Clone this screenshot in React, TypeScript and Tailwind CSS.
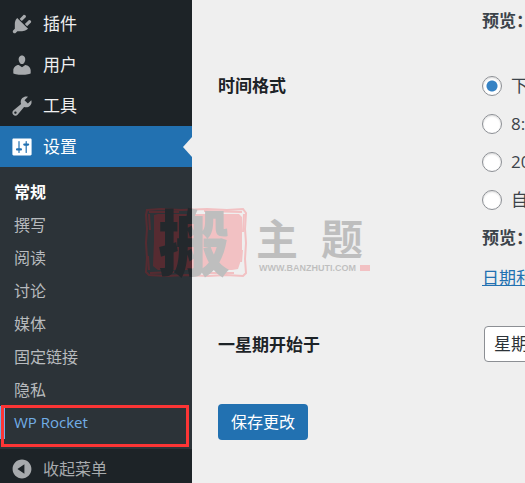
import type { ReactNode } from "react";

const menu = [
  {
    label: "插件",
    path: "M13.11 4.36L9.87 7.6 8 5.73l3.24-3.24c.35-.34 1.05-.2 1.56.32.52.51.66 1.21.31 1.55zm-8 1.77l.91-1.12 9.01 9.01-1.19.84c-.71.71-2.63 1.16-3.82 1.16H6.14L4.9 17.26c-.59.59-1.54.59-2.12 0-.59-.58-.59-1.53 0-2.12l1.24-1.24v-3.88c0-1.13.4-3.19 1.09-3.89zm7.26 3.97l3.24-3.24c.34-.35 1.04-.21 1.55.31.52.51.66 1.21.31 1.55l-3.24 3.25z",
  },
  {
    label: "用户",
    path: "M10 9.25c-2.27 0-2.73-3.44-2.73-3.44C7 4.02 7.82 2 9.97 2c2.16 0 2.98 2.02 2.71 3.81 0 0-.41 3.44-2.68 3.44zm0 2.57L12.72 10c2.39 0 4.52 2.33 4.52 4.53v2.49s-3.65 1.13-7.24 1.13c-3.65 0-7.24-1.13-7.24-1.13v-2.49c0-2.25 1.94-4.48 4.47-4.48z",
  },
  {
    label: "工具",
    path: "M16.68 9.77c-1.34 1.34-3.3 1.67-4.95.99l-5.41 6.52c-.99.99-2.59.99-3.58 0s-.99-2.59 0-3.57l6.52-5.42c-.68-1.65-.35-3.61.99-4.95 1.28-1.28 3.12-1.62 4.72-1.06l-2.89 2.89 2.82 2.82 2.86-2.87c.53 1.58.18 3.39-1.08 4.65zM3.81 16.21c.4.39 1.04.39 1.43 0 .4-.4.4-1.04 0-1.43-.39-.4-1.03-.4-1.43 0-.39.39-.39 1.03 0 1.43z",
  },
];

const settingsPath =
  "M18 16V4c0-.55-.45-1-1-1H3c-.55 0-1 .45-1 1v12c0 .55.45 1 1 1h14c.55 0 1-.45 1-1zM8 11h1c.55 0 1 .45 1 1s-.45 1-1 1H8v1.5c0 .28-.22.5-.5.5s-.5-.22-.5-.5V13H6c-.55 0-1-.45-1-1s.45-1 1-1h1V5.5c0-.28.22-.5.5-.5s.5.22.5.5V11zm5-2h-1c-.55 0-1-.45-1-1s.45-1 1-1h1V5.5c0-.28.22-.5.5-.5s.5.22.5.5V7h1c.55 0 1 .45 1 1s-.45 1-1 1h-1v5.5c0 .28-.22.5-.5.5s-.5-.22-.5-.5V9z";

const collapsePath =
  "M10 2.16c4.33 0 7.84 3.51 7.84 7.84s-3.51 7.84-7.84 7.84S2.16 14.33 2.16 10 5.67 2.16 10 2.16zm2 11.72V6.12L6.18 9.97z";

const submenu = ["撰写", "阅读", "讨论", "媒体", "固定链接", "隐私"];

const timeFormats = ["下午8:25", "8:25 下午", "20:25", "自定义："];

const Icon = ({ path }: { path: string }) => (
  <svg viewBox="0 0 20 20" className="size-6 shrink-0" fill="currentColor" aria-hidden="true">
    <path fillRule="evenodd" d={path} />
  </svg>
);

const Sidebar = () => (
  <nav className="w-48 shrink-0 bg-[#1d2327] pt-[3px] text-[17px] text-[#f0f0f1]">
    {menu.map((item) => (
      <a key={item.label} href="#" className="flex h-[41px] items-center gap-[9px] pl-2.5">
        <span className="text-[#a7aaad]">
          <Icon path={item.path} />
        </span>
        {item.label}
      </a>
    ))}
    <a href="#" className="relative flex h-[41px] items-center gap-[9px] bg-[#2271b1] pl-2.5 text-white">
      <Icon path={settingsPath} />
      设置
      <span className="absolute right-0 top-1/2 -translate-y-1/2 border-y-10 border-r-9 border-y-transparent border-r-[#efefef]" />
    </a>
    <ul className="bg-[#2c3338] pb-2.5 pt-2 text-base text-[#b8bbbe]">
      <li>
        <a href="#" className="flex h-[33px] items-center pl-3.5 font-bold text-white">
          常规
        </a>
      </li>
      {submenu.map((label) => (
        <li key={label}>
          <a href="#" className="flex h-[33px] items-center pl-3.5">
            {label}
          </a>
        </li>
      ))}
      <li className="relative">
        <a
          href="#"
          className="flex h-[33px] items-center border-l-5 border-[#72aee6] pl-[9px] text-[15px] text-[#72aee6]"
        >
          WP Rocket
        </a>
        <span className="absolute -top-px left-px h-[42px] w-[188px] border-3 border-[#fc3535]" />
      </li>
    </ul>
    <button type="button" className="flex h-10 items-center gap-[9px] pl-2.5 text-base text-[#a7aaad]">
      <Icon path={collapsePath} />
      收起菜单
    </button>
  </nav>
);

const Row = ({ label, children }: { label: ReactNode; children: ReactNode }) => (
  <div className="grid grid-cols-[264px_1fr]">
    <div className="font-bold text-[#1d2327]">{label}</div>
    <div className="min-w-0 whitespace-nowrap">{children}</div>
  </div>
);

const Watermark = () => (
  <div className="pointer-events-none absolute left-[144px] top-[206px] flex gap-1 opacity-20" aria-hidden="true">
    <div className="relative h-[72px] w-[104px]">
      <svg viewBox="0 0 104 72" className="h-[72px] w-[104px]" fill="none">
        <path
          d="M3 4l14-1 20 1 26-1 20 1 16-1 3 4-1 16 1 14-1 16 1 14-3 3-17-1-18 1-22-1-20 1-17-1-3-3 1-14-1-15 1-14-1-14z"
          stroke="#ff1018"
          strokeWidth="2"
        />
        <path d="M5 8l1 16M5 6l30 0M60 5l38 1M100 8l-1 18M98 44l-1 12M4 50l1 14M6 67l24-1M60 67l30 0" stroke="#ff1018" strokeWidth="2" />
        <path d="M10 9l4-1h81l3 3v34l-2 12-2 6-6 1H14l-5-4 1-25z" fill="#ff1018" />
      </svg>
      <span className="absolute left-3.5 top-0 text-[72px] font-black leading-[72px] text-black">搬</span>
    </div>
    <div className="flex flex-col pt-3 text-black">
      <div className="flex gap-[23px] pl-1 text-[42px] font-bold leading-[42px]">
        <span>主</span>
        <span>题</span>
      </div>
      <div className="flex items-center gap-1 pl-[7px] font-['Liberation_Sans',sans-serif] text-[9px] font-bold leading-4">
        WWW.BANZHUTI.COM
        <span className="h-1.5 w-2.5 bg-[#ff1018]" />
      </div>
    </div>
  </div>
);

const App = () => {
  return (
    <div className="relative flex h-screen overflow-hidden bg-[#efefef] font-['Open_Sans','Noto_Sans_CJK_SC',sans-serif] text-[#3c434a]">
      <Sidebar />
      <main className="min-w-0 flex-1 overflow-hidden pl-[26px] pt-2 text-[17px] leading-[26px]">
        <Row label="">
          <strong>预览：</strong>
        </Row>
        <div className="pt-[39px]">
          <Row label={<span id="time_format_label">时间格式</span>}>
            <fieldset aria-labelledby="time_format_label">
              {timeFormats.map((format, index) => (
                <label key={format} className="mb-3 flex items-center gap-[9px]">
                  <input
                    type="radio"
                    name="time_format"
                    defaultChecked={index === 0}
                    className="size-5 shrink-0 appearance-none rounded-full border border-[#8c8f94] bg-white shadow-[inset_0_1px_2px_rgba(0,0,0,0.15)] checked:bg-[radial-gradient(circle,#3582c4_5px,#fff_6px)]"
                  />
                  {format}
                </label>
              ))}
              <p>
                <strong>预览：</strong>
              </p>
              <p className="pt-3.5">
                <a href="#" className="text-[#2271b1] underline">
                  日期和时间格式文档
                </a>
              </p>
            </fieldset>
          </Row>
        </div>
        <div className="pt-[35px]">
          <Row label={<label htmlFor="start_of_week" className="block pt-1.5">一星期开始于</label>}>
            <select
              id="start_of_week"
              className="ml-0.5 h-9 w-32 appearance-none rounded-[4px] border border-[#8c8f94] bg-white pl-[9px] leading-8 text-[#2c3338]"
            >
              <option>星期一</option>
              <option>星期日</option>
            </select>
          </Row>
        </div>
        <button
          type="submit"
          className="mt-[42px] h-9 rounded-[4px] bg-[#2271b1] px-[13px] text-base text-white"
        >
          保存更改
        </button>
      </main>
      <Watermark />
    </div>
  );
};

export default App;
